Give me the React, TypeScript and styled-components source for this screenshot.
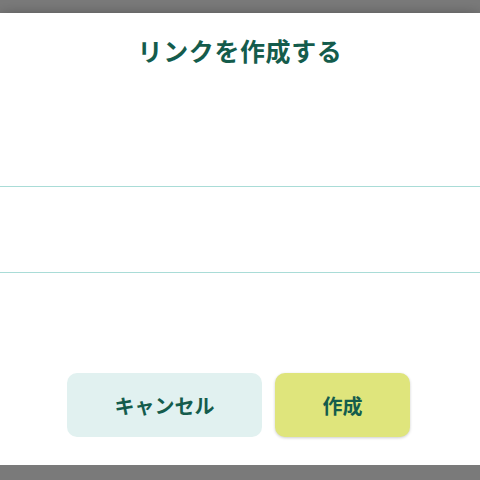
import React from 'react'
import styled, { createGlobalStyle } from 'styled-components'

const GlobalStyle = createGlobalStyle`
  html, body {
    margin: 0;
    padding: 0;
    background-color: #7a7a7a;
    font-family: "Noto Sans CJK JP", "Noto Sans", sans-serif;
  }
`

const Dialog = styled.div`
  margin-top: 13px;
  height: 452px;
  background-color: white;
  box-shadow: 0 6px 16px rgba(0, 0, 0, 0.6);
  display: flex;
  flex-direction: column;
  align-items: center;
`

const Title = styled.h2`
  margin: 19px 0 0;
  font-size: 25px;
  line-height: 36px;
  font-weight: 700;
  letter-spacing: 0.6px;
  color: #145c4c;
`

const LinkInput = styled.input`
  box-sizing: border-box;
  margin-top: 118px;
  width: 100%;
  height: 87px;
  border: none;
  border-top: 1px solid #a9dcd7;
  border-bottom: 1px solid #a9dcd7;
  outline: none;
  background: white;
  font-family: inherit;
  font-size: 18px;
  padding: 0 20px;
`

const Actions = styled.div`
  margin-top: 100px;
  display: flex;
  gap: 13px;
  padding-right: 3px;
`

const Button = styled.button<{ $primary?: boolean; $width: number }>`
  width: ${({ $width }) => $width}px;
  height: 64px;
  padding: 0;
  border: none;
  border-radius: 10px;
  font-family: inherit;
  font-size: 20px;
  font-weight: 700;
  color: #145c4c;
  cursor: pointer;
  background-color: ${({ $primary }) => ($primary ? '#dfe57c' : '#e1f1f0')};
  box-shadow: ${({ $primary }) => ($primary ? '0 1px 3px rgba(0, 0, 0, 0.2)' : 'none')};
`

const App = () => {
  return (
    <>
      <GlobalStyle />
      <Dialog>
        <Title>リンクを作成する</Title>
        <LinkInput type="text" />
        <Actions>
          <Button $width={195}>キャンセル</Button>
          <Button $width={135} $primary>作成</Button>
        </Actions>
      </Dialog>
    </>
  )
}

export default App
